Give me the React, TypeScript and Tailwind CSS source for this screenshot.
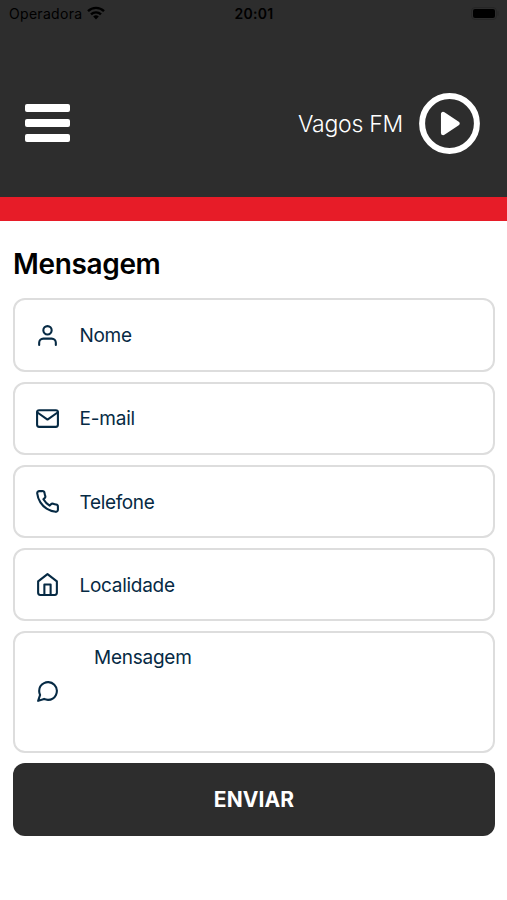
import type { ReactNode } from "react";

function FieldIcon({ children }: { children: ReactNode }) {
  return (
    <svg
      className="h-[25px] w-[25px] shrink-0"
      viewBox="0 0 24 24"
      fill="none"
      stroke="currentColor"
      strokeWidth="2"
      strokeLinecap="round"
      strokeLinejoin="round"
    >
      {children}
    </svg>
  );
}

const fields = [
  {
    label: "Nome",
    tracking: "tracking-[-0.3px]",
    icon: (
      <>
        <path d="M20 21v-2a4 4 0 0 0-4-4H8a4 4 0 0 0-4 4v2" />
        <circle cx="12" cy="7" r="4" />
      </>
    ),
  },
  {
    label: "E-mail",
    tracking: "tracking-[-0.2px]",
    icon: (
      <>
        <path d="M4 4h16c1.1 0 2 .9 2 2v12c0 1.100-.9 2-2 2H4c-1.100 0-2-.9-2-2V6c0-1.100.9-2 2-2z" />
        <polyline points="22,6 12,13 2,6" />
      </>
    ),
  },
  {
    label: "Telefone",
    tracking: "tracking-[-0.35px]",
    icon: (
      <path d="M22 16.920v3a2 2 0 0 1-2.180 2 19.790 19.790 0 0 1-8.630-3.070 19.500 19.500 0 0 1-6-6 19.790 19.790 0 0 1-3.070-8.670A2 2 0 0 1 4.110 2h3a2 2 0 0 1 2 1.720 12.840 12.840 0 0 0 .7 2.810 2 2 0 0 1-.45 2.110L8.090 9.910a16 16 0 0 0 6 6l1.270-1.270a2 2 0 0 1 2.110-.45 12.840 12.840 0 0 0 2.810.7A2 2 0 0 1 22 16.920z" />
    ),
  },
  {
    label: "Localidade",
    tracking: "tracking-[-0.28px]",
    icon: (
      <>
        <path d="M3 9l9-7 9 7v11a2 2 0 0 1-2 2H5a2 2 0 0 1-2-2z" />
        <polyline points="9 22 9 12 15 12 15 22" />
      </>
    ),
  },
];

function StatusBar() {
  return (
    <div className="grid h-[26px] grid-cols-3 items-center pr-2 pl-[9px] text-black">
      <div className="flex items-center gap-[5px]">
        <span className="text-[14px] tracking-[0.3px]">Operadora</span>
        <svg className="h-[14px] w-[18px]" viewBox="0 0 18 14" fill="none" stroke="currentColor" strokeWidth="2.4">
          <path d="M1 5.100a11.500 11.500 0 0 1 16 0" />
          <path d="M4 8.400a7.200 7.200 0 0 1 10 0" />
          <path d="M9 13.500 6.200 10.600a4 4 0 0 1 5.600 0z" fill="currentColor" stroke="none" />
        </svg>
      </div>
      <span className="text-center text-[14px] font-semibold tracking-[0.3px]">20:01</span>
      <svg className="h-[13px] w-[28px] justify-self-end" viewBox="0 0 28 13">
        <rect x="0.500" y="0.500" width="25" height="12" rx="3.500" fill="none" stroke="#262626" />
        <rect x="2" y="2" width="22" height="9" rx="2" fill="black" />
        <path d="M27 4.500v4" stroke="#262626" />
      </svg>
    </div>
  );
}

export default function App() {
  return (
    <main className="min-h-[900px] w-full bg-white font-['Inter','Liberation_Sans',sans-serif]">
      <header className="h-[220.5px] border-b-[24px] border-[#e71c28] bg-[#2d2d2d]">
        <StatusBar />
        <div className="flex h-[194px] items-center justify-between pr-[27px] pl-[25px]">
          <button aria-label="Menu" className="flex w-[45px] flex-col gap-[6.5px]">
            <span className="h-[8.2px] rounded-[2px] bg-white" />
            <span className="h-[8.2px] rounded-[2px] bg-white" />
            <span className="h-[8.2px] rounded-[2px] bg-white" />
          </button>
          <div className="flex items-center gap-4">
            <span className="pt-[2px] text-[23px] font-light tracking-[-0.25px] text-white">Vagos FM</span>
            <button aria-label="Play">
              <svg className="block h-[61px] w-[61px]" viewBox="0 0 61 61">
                <circle cx="30.500" cy="30.500" r="27.400" fill="none" stroke="white" strokeWidth="6" />
                <path d="M24.200 21v19L38.500 30.500z" fill="white" stroke="white" strokeWidth="4.500" strokeLinejoin="round" />
              </svg>
            </button>
          </div>
        </div>
      </header>
      <section className="flex flex-col gap-[9.8px] pt-[26px] pr-[12px] pl-[13px]">
        <h1 className="mb-[8.2px] h-[34px] text-[28px] leading-[34px] font-semibold tracking-[-0.35px] text-black">
          Mensagem
        </h1>
        {fields.map((field) => (
          <div
            key={field.label}
            className="flex h-[73.3px] items-center gap-[19.5px] rounded-[12px] border-2 border-[#dddddd] pl-5 text-[#062a44]"
          >
            <FieldIcon>{field.icon}</FieldIcon>
            <span className={`pt-[3px] text-[19px] ${field.tracking}`}>{field.label}</span>
          </div>
        ))}
        <div className="flex h-[122px] items-center gap-[34px] rounded-[12px] border-2 border-[#dddddd] pl-5 text-[#062a44]">
          <FieldIcon>
            <path d="M21 11.500a8.380 8.380 0 0 1-.9 3.800 8.500 8.500 0 0 1-7.600 4.700 8.380 8.380 0 0 1-3.800-.9L3 21l1.900-5.700a8.380 8.380 0 0 1-.9-3.800 8.500 8.500 0 0 1 4.700-7.600 8.380 8.380 0 0 1 3.800-.9h.5a8.480 8.480 0 0 1 8 8v.5z" />
          </FieldIcon>
          <span className="self-start pt-[11px] text-[19px] tracking-[-0.25px]">Mensagem</span>
        </div>
        <button className="h-[73px] rounded-[12px] bg-[#2d2d2d] pt-px text-[21px] font-bold tracking-[0.1px] text-white">
          ENVIAR
        </button>
      </section>
    </main>
  );
}
